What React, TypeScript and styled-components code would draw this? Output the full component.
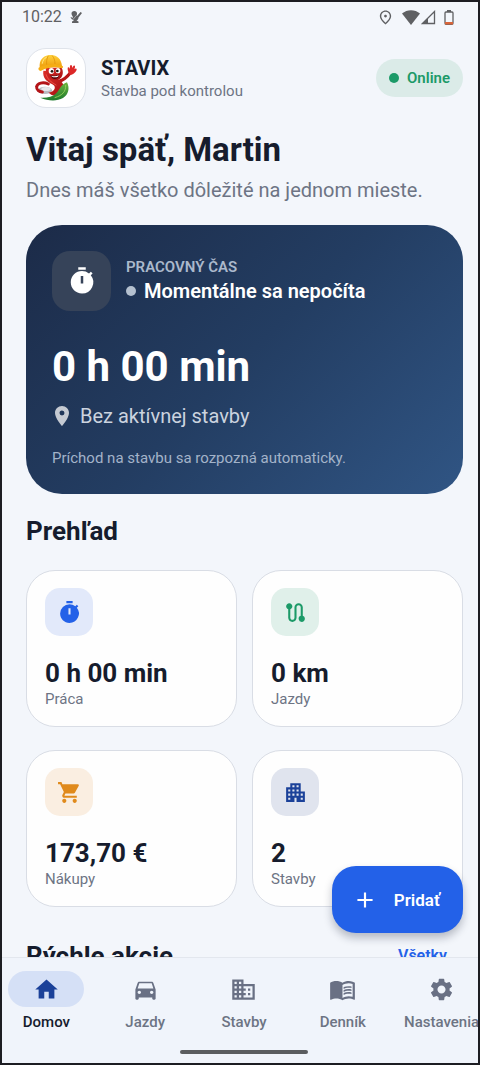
import React from "react";
import styled, { createGlobalStyle } from "styled-components";
import {
  MdAdd,
  MdApartment,
  MdBusiness,
  MdDirectionsCar,
  MdHome,
  MdMenuBook,
  MdPlace,
  MdOutlinePlace,
  MdRoute,
  MdSettings,
  MdShoppingCart,
  MdTimer,
} from "react-icons/md";
import type { IconType } from "react-icons";

const GlobalStyle = createGlobalStyle`
  *, *::before, *::after { box-sizing: border-box; }
  body { margin: 0; background: #f3f6fb; font-family: Roboto, "Noto Sans", sans-serif; color: #161c2d; }
  h1, h2, p { margin: 0; }
  button { font-family: inherit; border: 0; cursor: pointer; }
  svg { display: block; flex: none; }
`;

const Screen = styled.div`
  display: flex;
  flex-direction: column;
  height: 100vh;
  overflow: hidden;
  border: 2px solid #1c1d22;
  background: #f3f6fb;
`;

const Viewport = styled.div`
  position: relative;
  flex: 1;
  min-height: 0;
  overflow: hidden;
`;

const StatusBar = styled.div`
  display: flex;
  align-items: center;
  height: 30px;
  padding: 0 24px 0 20px;
  color: #5f6063;
  font-size: 16px;
  line-height: 20px;
`;

const StatusTime = styled.span`
  margin-right: 8px;
`;

const StatusIcons = styled.div`
  display: flex;
  align-items: center;
  gap: 8px;
  margin-left: auto;
`;

const Reception = styled.div`
  display: flex;
  gap: 1px;
`;

const Content = styled.main`
  padding: 16px 15px 0 24px;
`;

const Header = styled.header`
  display: flex;
  align-items: center;
  gap: 15px;
`;

const Logo = styled.div`
  width: 60px;
  height: 60px;
  overflow: hidden;
  border: 1px solid #dfe3ea;
  border-radius: 20px;
  background: #fff;
`;

const Brand = styled.div`
  flex: 1;
  padding-top: 2px;
`;

const BrandName = styled.p`
  font-size: 20px;
  font-weight: 700;
  line-height: 24px;
`;

const BrandTagline = styled.p`
  font-size: 15px;
  line-height: 22px;
  color: #6d7484;
`;

const OnlineBadge = styled.div`
  display: flex;
  align-items: center;
  gap: 8px;
  height: 38px;
  padding: 0 13px;
  border-radius: 19px;
  background: #dbebe8;
  color: #1c9a68;
  font-size: 15px;
  font-weight: 600;
`;

const Dot = styled.span<{ $color: string }>`
  width: 10px;
  height: 10px;
  border-radius: 50%;
  background: ${(p) => p.$color};
`;

const Greeting = styled.h1`
  margin-top: 22px;
  font-size: 33px;
  font-weight: 700;
  line-height: 40px;
`;

const GreetingNote = styled.p`
  margin-top: 7px;
  font-size: 20px;
  line-height: 26px;
  color: #6d7484;
`;

const Hero = styled.section`
  margin-top: 22px;
  padding: 26px 26px 25px;
  border-radius: 36px;
  background: linear-gradient(135deg, #1c2b48 0%, #233d62 50%, #305584 100%);
  color: #fff;
`;

const HeroTop = styled.div`
  display: flex;
  align-items: center;
  gap: 15px;
`;

const HeroIcon = styled.div`
  display: grid;
  place-items: center;
  width: 59px;
  height: 60px;
  border-radius: 18px;
  background: #364359;
`;

const HeroHeading = styled.div`
  padding-bottom: 3px;
`;

const HeroLabel = styled.p`
  font-size: 15px;
  font-weight: 600;
  line-height: 22px;
  color: #abb9cc;
`;

const HeroStatus = styled.p`
  display: flex;
  align-items: center;
  gap: 8px;
  font-size: 20px;
  font-weight: 600;
  line-height: 26px;
`;

const HeroTime = styled.p`
  margin-top: 31px;
  font-size: 42px;
  font-weight: 700;
  line-height: 50px;
`;

const HeroPlace = styled.p`
  display: flex;
  align-items: center;
  gap: 6px;
  margin-top: 11px;
  font-size: 20px;
  line-height: 26px;
  color: #cbd3df;

  svg {
    margin-left: -2px;
    color: #c5cad2;
  }
`;

const HeroNote = styled.p`
  margin-top: 18px;
  font-size: 15px;
  line-height: 22px;
  color: #a3b3c9;
`;

const SectionHead = styled.div<{ $top: number }>`
  display: flex;
  align-items: center;
  justify-content: space-between;
  margin-top: ${(p) => p.$top}px;
  padding-right: 16px;
`;

const SectionTitle = styled.h2`
  font-size: 26px;
  font-weight: 700;
  line-height: 32px;
`;

const SectionLink = styled.a`
  font-size: 16px;
  font-weight: 600;
  line-height: 32px;
  color: #2361e8;
  text-decoration: none;
`;

const Grid = styled.div`
  display: grid;
  grid-template-columns: 1fr 1fr;
  gap: 23px 15px;
  margin-top: 23px;
`;

const Card = styled.article`
  padding: 17px 18px;
  border: 1px solid #d9dde5;
  border-radius: 29px;
  background: #fefefe;
`;

const CardIcon = styled.div<{ $bg: string; $fg: string }>`
  display: grid;
  place-items: center;
  width: 48px;
  height: 48px;
  border-radius: 15px;
  background: ${(p) => p.$bg};
  color: ${(p) => p.$fg};
`;

const CardValue = styled.p`
  margin-top: 21px;
  font-size: 26px;
  font-weight: 700;
  line-height: 32px;
`;

const CardLabel = styled.p`
  font-size: 15px;
  line-height: 20px;
  color: #6d7484;
`;

const AddButton = styled.button`
  position: absolute;
  right: 15px;
  bottom: 24px;
  display: flex;
  align-items: center;
  gap: 16px;
  height: 67px;
  padding: 0 23px 0 20px;
  border-radius: 24px;
  background: #2361e8;
  box-shadow: 0 5px 9px rgba(20, 30, 55, 0.28);
  color: #fff;
  font-size: 17px;
  font-weight: 600;
`;

const BottomBar = styled.footer`
  border-top: 1px solid #e3e7ee;
  background: #f0f4fb;
`;

const Tabs = styled.nav`
  display: grid;
  grid-template-columns: repeat(5, 1fr);
  margin: 0 -13px 0 -5px;
  padding-top: 13px;
`;

const Tab = styled.button<{ $active: boolean }>`
  display: flex;
  flex-direction: column;
  align-items: center;
  gap: 5px;
  padding: 0;
  background: none;
  font-size: 15px;
  font-weight: 500;
  line-height: 20px;
  color: ${(p) => (p.$active ? "#161c2d" : "#6d7484")};
`;

const TabIcon = styled.span<{ $active: boolean }>`
  display: grid;
  place-items: center;
  width: 76px;
  height: 36px;
  border-radius: 18px;
  background: ${(p) => (p.$active ? "#d5e0f6" : "transparent")};
  color: ${(p) => (p.$active ? "#1b4199" : "#697084")};
`;

const HandleArea = styled.div`
  display: flex;
  justify-content: center;
  padding: 18px 0 9px 8px;
`;

const HomeHandle = styled.div`
  width: 128px;
  height: 4px;
  border-radius: 2px;
  background: #5b5d60;
`;

const MutedMicIcon = () => (
  <svg width="12" height="12" viewBox="0 0 24 24" fill="#5f6063" aria-hidden="true">
    <path d="M3 5c0-3 2-5 5.500-5S14 2 14 5v5l7-8 3 2-7 9c0 3-2 5-4 6l4 2v3H4v-3l4-2c-3-1-6-3-7-7l3 1 1 1 1-2C4 9 3 7 3 5z" />
    <path d="M5 18 19 2" stroke="#f3f6fb" strokeWidth="1" />
  </svg>
);

const WifiIcon = () => (
  <svg width="18" height="15" viewBox="0 0 18 15" fill="#5f6063" aria-hidden="true">
    <path d="M0 3.500C5-1 13-1 18 3.500L9 15z" />
  </svg>
);

const SignalIcon = () => (
  <svg width="15" height="15" viewBox="0 0 15 15" aria-hidden="true">
    <path d="M13.500 1.500v12H1.500z" fill="none" stroke="#5f6063" strokeWidth="1.300" />
    <path d="M7 8v6H1z" fill="#5f6063" />
  </svg>
);

const BatteryIcon = () => (
  <svg width="10" height="15" viewBox="0 0 10 15" aria-hidden="true">
    <path d="M3 0h4v2H3z" fill="#5f6063" />
    <rect x="1" y="2" width="8" height="12.300" rx="1" fill="none" stroke="#5f6063" strokeWidth="1.300" />
    <path d="M1 12h8v2.500H1z" fill="#d9653a" />
  </svg>
);

const MascotIcon = () => (
  <svg width="58" height="58" viewBox="33 27 174 174" role="img" aria-label="Stavix">
    <defs>
      <linearGradient id="tail" x1="0" y1="0" x2="0" y2="1">
        <stop offset="0" stopColor="#6db33f" />
        <stop offset="1" stopColor="#1d7a2c" />
      </linearGradient>
      <linearGradient id="body" x1="0" y1="0" x2="1" y2="1">
        <stop offset="0" stopColor="#dd2f28" />
        <stop offset="1" stopColor="#a60f12" />
      </linearGradient>
      <linearGradient id="helmet" x1="0" y1="0" x2="0" y2="1">
        <stop offset="0" stopColor="#ffd23c" />
        <stop offset="1" stopColor="#ee9c0c" />
      </linearGradient>
    </defs>
    <ellipse cx="87" cy="151" rx="21" ry="11" fill="#b9bcc1" />
    <ellipse cx="90" cy="147" rx="14" ry="6" fill="#e6e7ea" />
    <path d="M128 124c16-3 25-12 37-28" fill="none" stroke="#b81517" strokeWidth="9" strokeLinecap="round" />
    <path d="M158 98c-3-6-4-14-2-16 3-1 5 3 6 5-1-6 0-12 3-12s4 6 4 10c1-5 4-10 7-8s0 7-1 11c3-3 7-3 7 0 0 5-7 14-15 16-5 1-8-2-9-6z" fill="#dc2828" />
    <path d="M97 132c-16-7-34-3-35 9-1 9 8 14 17 15" fill="none" stroke="#b31518" strokeWidth="9" strokeLinecap="round" />
    <path d="M82 92c-3 22 10 32 27 41 9 5 9 12 4 18-5 5-11 7-16 6 9 12 29 15 40 4 13-13 8-31-7-41-10-6-16-13-15-25z" fill="url(#body)" />
    <path d="M91 104c3 14 13 21 29 31" fill="none" stroke="#ee5144" strokeWidth="3" strokeLinecap="round" />
    <path d="M134 141c6-7 12-11 19-14 9 18 5 37-12 47-19 11-45 9-68-1 21 1 37-3 46-12 8-7 10-13 15-20z" fill="url(#tail)" />
    <path d="M149 135c1 19-9 31-33 38" fill="none" stroke="#8fce58" strokeWidth="3" />
    <path d="M90 83h47c5 10 5 22-2 30-9 10-27 8-37-2-8-8-10-19-8-28z" fill="url(#body)" />
    <path d="M103 105c9 4 19 3 27-2-1 9-6 15-14 14-7 0-11-5-13-12z" fill="#54090d" />
    <path d="M106 107c8 3 15 2 22-1l-2 4c-6 2-13 2-18 0z" fill="#fff" />
    <ellipse cx="106" cy="93" rx="8" ry="9" fill="#fff" />
    <ellipse cx="126" cy="92" rx="7" ry="8" fill="#fff" />
    <circle cx="108" cy="94" r="4" fill="#251813" />
    <circle cx="124" cy="93" r="4" fill="#251813" />
    <path d="M71 82c-2-21 9-34 29-37 22-2 36 11 38 33z" fill="url(#helmet)" />
    <path d="M68 83c15-9 51-13 72-5 2 3 1 6-3 7-22-6-42-3-63 8-6-1-8-6-6-10z" fill="#f5ad14" />
    <path d="M97 47c-5 9-6 18-5 27M108 46c7 8 9 17 9 26" fill="none" stroke="#d98b08" strokeWidth="2" />
    <path d="M79 70c1-9 6-15 12-18" fill="none" stroke="#ffe680" strokeWidth="3" strokeLinecap="round" />
  </svg>
);

interface Stat {
  value: string;
  label: string;
  icon: IconType;
  bg: string;
  fg: string;
}

const stats: Stat[] = [
  { value: "0 h 00 min", label: "Práca", icon: MdTimer, bg: "#e2e9fa", fg: "#2361e8" },
  { value: "0 km", label: "Jazdy", icon: MdRoute, bg: "#e0f0ea", fg: "#1c9a68" },
  { value: "173,70 €", label: "Nákupy", icon: MdShoppingCart, bg: "#faeee1", fg: "#e08a1c" },
  { value: "2", label: "Stavby", icon: MdApartment, bg: "#e0e4ee", fg: "#1b4199" },
];

const tabs: { label: string; icon: IconType }[] = [
  { label: "Domov", icon: MdHome },
  { label: "Jazdy", icon: MdDirectionsCar },
  { label: "Stavby", icon: MdBusiness },
  { label: "Denník", icon: MdMenuBook },
  { label: "Nastavenia", icon: MdSettings },
];

export default function App() {
  return (
    <Screen>
      <GlobalStyle />
      <Viewport>
        <StatusBar>
          <StatusTime>10:22</StatusTime>
          <MutedMicIcon />
          <StatusIcons>
            <MdOutlinePlace size={17} />
            <Reception>
              <WifiIcon />
              <SignalIcon />
            </Reception>
            <BatteryIcon />
          </StatusIcons>
        </StatusBar>
        <Content>
          <Header>
            <Logo>
              <MascotIcon />
            </Logo>
            <Brand>
              <BrandName>STAVIX</BrandName>
              <BrandTagline>Stavba pod kontrolou</BrandTagline>
            </Brand>
            <OnlineBadge>
              <Dot $color="#1c9a68" />
              Online
            </OnlineBadge>
          </Header>
          <Greeting>Vitaj späť, Martin</Greeting>
          <GreetingNote>Dnes máš všetko dôležité na jednom mieste.</GreetingNote>
          <Hero>
            <HeroTop>
              <HeroIcon>
                <MdTimer size={30} />
              </HeroIcon>
              <HeroHeading>
                <HeroLabel>PRACOVNÝ ČAS</HeroLabel>
                <HeroStatus>
                  <Dot $color="#b4c0cf" />
                  Momentálne sa nepočíta
                </HeroStatus>
              </HeroHeading>
            </HeroTop>
            <HeroTime>0 h 00 min</HeroTime>
            <HeroPlace>
              <MdPlace size={24} />
              Bez aktívnej stavby
            </HeroPlace>
            <HeroNote>Príchod na stavbu sa rozpozná automaticky.</HeroNote>
          </Hero>
          <SectionHead $top={21}>
            <SectionTitle>Prehľad</SectionTitle>
          </SectionHead>
          <Grid>
            {stats.map(({ value, label, icon: Icon, bg, fg }) => (
              <Card key={label}>
                <CardIcon $bg={bg} $fg={fg}>
                  <Icon size={25} />
                </CardIcon>
                <CardValue>{value}</CardValue>
                <CardLabel>{label}</CardLabel>
              </Card>
            ))}
          </Grid>
          <SectionHead $top={33}>
            <SectionTitle>Rýchle akcie</SectionTitle>
            <SectionLink href="#akcie">Všetky</SectionLink>
          </SectionHead>
        </Content>
        <AddButton type="button">
          <MdAdd size={26} />
          Pridať
        </AddButton>
      </Viewport>
      <BottomBar>
        <Tabs>
          {tabs.map(({ label, icon: Icon }, i) => (
            <Tab key={label} type="button" $active={i === 0}>
              <TabIcon $active={i === 0}>
                <Icon size={27} />
              </TabIcon>
              {label}
            </Tab>
          ))}
        </Tabs>
        <HandleArea>
          <HomeHandle />
        </HandleArea>
      </BottomBar>
    </Screen>
  );
}
